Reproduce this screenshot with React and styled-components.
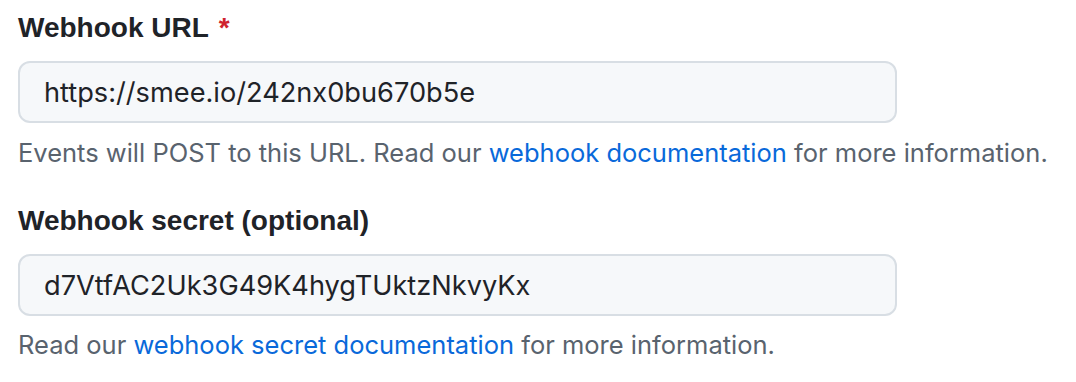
import React from 'react';
import styled, { createGlobalStyle } from 'styled-components';

const GlobalStyle = createGlobalStyle`
  body {
    margin: 0;
    background: #ffffff;
    font-family: "Liberation Sans", Arial, sans-serif;
    color: #1f2328;
  }
`;

const Form = styled.div`
  padding: 7px 0 0 18px;
  width: 1058px;
`;

const Field = styled.div`
  display: flex;
  flex-direction: column;
  margin-bottom: ${props => props.spacing || 0}px;
`;

const Label = styled.label`
  font-size: 28px;
  font-weight: 700;
  line-height: 42px;
  color: #1f2328;
`;

const Required = styled.span`
  color: #cf222e;
  margin-left: 10px;
`;

const TextInput = styled.input`
  box-sizing: border-box;
  margin-top: 12px;
  width: 879px;
  height: 62px;
  padding: 0 24px;
  font-family: Inter, "Liberation Sans", sans-serif;
  font-size: 27.2px;
  color: #1f2328;
  background: #f6f8fa;
  border: 2px solid #d8dee4;
  border-radius: 12px;
  outline: none;
`;

const Note = styled.p`
  margin: ${props => props.gap || 12}px 0 0;
  font-family: Inter, "Liberation Sans", sans-serif;
  font-size: 25.5px;
  line-height: 36px;
  color: #59636e;
`;

const DocLink = styled.a`
  color: #0969da;
  text-decoration: none;
`;

export default function App() {
  return (
    <>
      <GlobalStyle />
      <Form>
        <Field spacing={29}>
          <Label>
            Webhook URL<Required>*</Required>
          </Label>
          <TextInput defaultValue="https://smee.io/242nx0bu670b5e" />
          <Note>
            Events will POST to this URL. Read our <DocLink href="#">webhook documentation</DocLink> for
            more information.
          </Note>
        </Field>
        <Field>
          <Label>Webhook secret (optional)</Label>
          <TextInput defaultValue="d7VtfAC2Uk3G49K4hygTUktzNkvyKx" />
          <Note gap={11}>
            Read our <DocLink href="#">webhook secret documentation</DocLink> for more information.
          </Note>
        </Field>
      </Form>
    </>
  );
}
